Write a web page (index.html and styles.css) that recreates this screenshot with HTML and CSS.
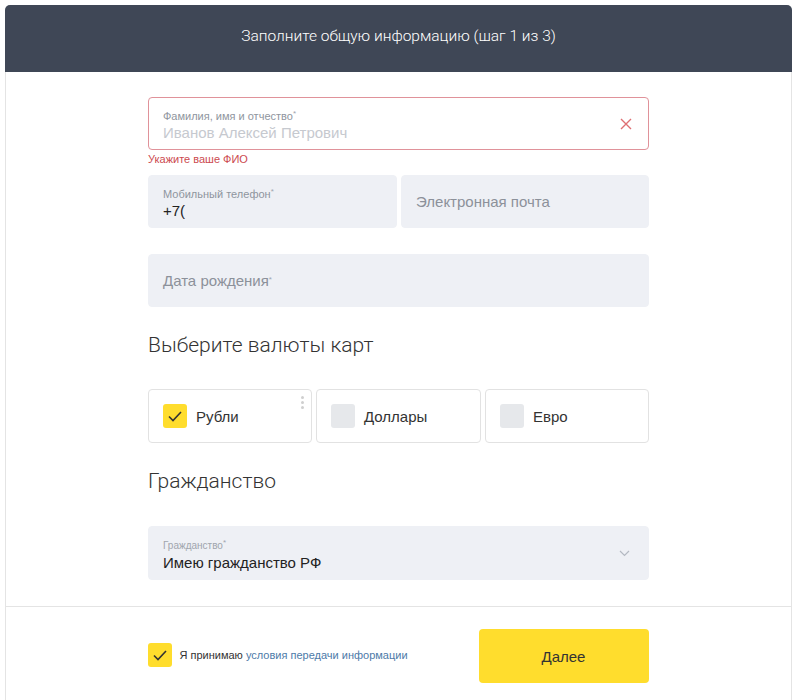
FILE: index.html
```html
<!DOCTYPE html>
<html lang="ru">
<head>
    <meta charset="UTF-8">
    <title>Заполните общую информацию</title>
    <link rel="stylesheet" href="styles.css">
</head>
<body>
    <div class="form-card">
        <div class="form-header">Заполните общую информацию (шаг 1 из 3)</div>

        <div class="form-body">
            <!-- ФИО -->
            <div class="field field-error">
                <div class="field-text">
                    <span class="field-label">Фамилия, имя и отчество<sup>*</sup></span>
                    <span class="field-placeholder">Иванов Алексей Петрович</span>
                </div>
                <svg class="field-clear" width="12" height="12" viewBox="0 0 12 12">
                    <path d="M1 1 L11 11 M11 1 L1 11" stroke="#de6f73" stroke-width="1.4" fill="none"/>
                </svg>
            </div>
            <div class="error-text">Укажите ваше ФИО</div>

            <div class="field-row">
                <div class="field">
                    <div class="field-text">
                        <span class="field-label">Мобильный телефон<sup>*</sup></span>
                        <span class="field-value">+7(</span>
                    </div>
                </div>
                <div class="field field-empty">
                    <span class="field-hint">Электронная почта</span>
                </div>
            </div>

            <div class="field field-empty field-date">
                <span class="field-hint">Дата рождения<sup>*</sup></span>
            </div>

            <h2 class="section-title">Выберите валюты карт</h2>

            <div class="currency-grid">
                <label class="currency-card">
                    <span class="check checked">
                        <svg width="14" height="11" viewBox="0 0 14 11"><path d="M1 5.5 L5 9.5 L13 1" stroke="#333" stroke-width="1.6" fill="none"/></svg>
                    </span>
                    Рубли
                    <span class="card-dots"><i></i><i></i><i></i></span>
                </label>
                <label class="currency-card">
                    <span class="check"></span>
                    Доллары
                </label>
                <label class="currency-card">
                    <span class="check"></span>
                    Евро
                </label>
            </div>

            <h2 class="section-title section-title-second">Гражданство</h2>

            <div class="field field-select">
                <div class="field-text">
                    <span class="field-label field-label-small">Гражданство<sup>*</sup></span>
                    <span class="field-value">Имею гражданство РФ</span>
                </div>
                <svg class="select-arrow" width="11" height="7" viewBox="0 0 11 7">
                    <path d="M1 1 L5.5 5.5 L10 1" stroke="#b4b9c2" stroke-width="1.2" fill="none"/>
                </svg>
            </div>
        </div>

        <div class="form-footer">
            <div class="agree">
                <span class="check checked">
                    <svg width="14" height="11" viewBox="0 0 14 11"><path d="M1 5.5 L5 9.5 L13 1" stroke="#333" stroke-width="1.6" fill="none"/></svg>
                </span>
                <span class="agree-text">Я принимаю <a href="#" class="agree-link">условия передачи информации</a></span>
            </div>
            <button class="btn-next">Далее</button>
        </div>
    </div>
</body>
</html>
```

FILE: styles.css
```css
* {
    margin: 0;
    padding: 0;
    box-sizing: border-box;
}

body {
    font-family: "Liberation Sans", Arial, sans-serif;
    background: #fff;
    color: #333;
    padding: 5px 8px 0 5px;
}

.form-card {
    border: 1px solid #e4e4e4;
    border-bottom: none;
    border-radius: 5px 5px 0 0;
    min-height: 700px;
}

.form-header {
    background: #3f4756;
    color: #fff;
    font-family: Roboto, sans-serif;
    font-weight: 300;
    font-size: 15.5px;
    text-align: center;
    height: 67px;
    line-height: 63px;
    margin: -1px -1px 0;
    border-radius: 5px 5px 0 0;
}

.form-body {
    width: 501px;
    margin: 0 auto;
    padding: 25px 0 26px;
}

/* Fields */
.field {
    position: relative;
    display: flex;
    align-items: center;
    height: 53px;
    padding: 0 14px;
    background: #eef0f5;
    border: 1px solid #eef0f5;
    border-radius: 4px;
}

.field-text {
    display: flex;
    flex-direction: column;
    padding-top: 3px;
}

.field-label {
    font-size: 11px;
    line-height: 14px;
    color: #8f959e;
}

.field-label-small {
    font-size: 10px;
    color: #a0a5ad;
}

sup {
    font-size: 8px;
    vertical-align: 4px;
    line-height: 0;
    color: #a0a5ad;
}

.field-value {
    font-size: 15px;
    line-height: 19px;
    color: #222;
}

.field-placeholder {
    font-size: 15px;
    line-height: 19px;
    color: #c6c9cf;
}

.field-hint {
    font-size: 15px;
    color: #8c919a;
}

.field-error {
    background: #fff;
    border-color: #e0929a;
}

.field-clear {
    margin-left: auto;
    margin-right: 2px;
}

.error-text {
    font-size: 11px;
    line-height: 14px;
    color: #cc4a4f;
    padding: 2px 0 0;
    height: 25px;
}

.field-row {
    display: grid;
    grid-template-columns: 249px 248px;
    gap: 4px;
}

.field-date {
    margin-top: 26px;
}

/* Section titles */
.section-title {
    font-family: Roboto, sans-serif;
    font-weight: 300;
    font-size: 21px;
    line-height: 28px;
    color: #333;
    margin: 24px 0 30px;
}

.section-title-second {
    margin: 24px 0 31px;
}

/* Currency cards */
.currency-grid {
    display: grid;
    grid-template-columns: 164px 165px 164px;
    gap: 4px;
}

.currency-card {
    position: relative;
    display: flex;
    align-items: center;
    gap: 9px;
    height: 54px;
    padding: 0 14px;
    border: 1px solid #e2e2e2;
    border-radius: 4px;
    font-size: 15px;
    color: #333;
}

.check {
    width: 24px;
    height: 24px;
    border-radius: 3px;
    background: #e6e8eb;
    display: flex;
    align-items: center;
    justify-content: center;
    flex-shrink: 0;
}

.check.checked {
    background: #ffdd2d;
}

.card-dots {
    position: absolute;
    top: 6px;
    right: 7px;
    display: flex;
    flex-direction: column;
    gap: 2px;
}

.card-dots i {
    width: 3px;
    height: 3px;
    border-radius: 50%;
    background: #cfcfcf;
}

/* Select */
.field-select {
    height: 54px;
}

.field-select .field-text {
    padding-top: 5px;
}

.select-arrow {
    margin-left: auto;
    margin-right: 4px;
}

/* Footer */
.form-footer {
    display: flex;
    justify-content: space-between;
    align-items: center;
    border-top: 1px solid #e4e4e4;
    padding: 22px calc(50% - 250px) 0 calc(50% - 251px);
}

.agree {
    display: flex;
    align-items: center;
    gap: 8px;
    margin-top: -2px;
}

.agree-text {
    font-size: 11px;
    color: #333;
}

.agree-link {
    color: #4d7aa8;
    text-decoration: none;
}

.btn-next {
    width: 170px;
    height: 54px;
    border: none;
    border-radius: 4px;
    background: #ffdd2d;
    color: #333;
    font-family: "Liberation Sans", Arial, sans-serif;
    font-size: 15px;
}
```
